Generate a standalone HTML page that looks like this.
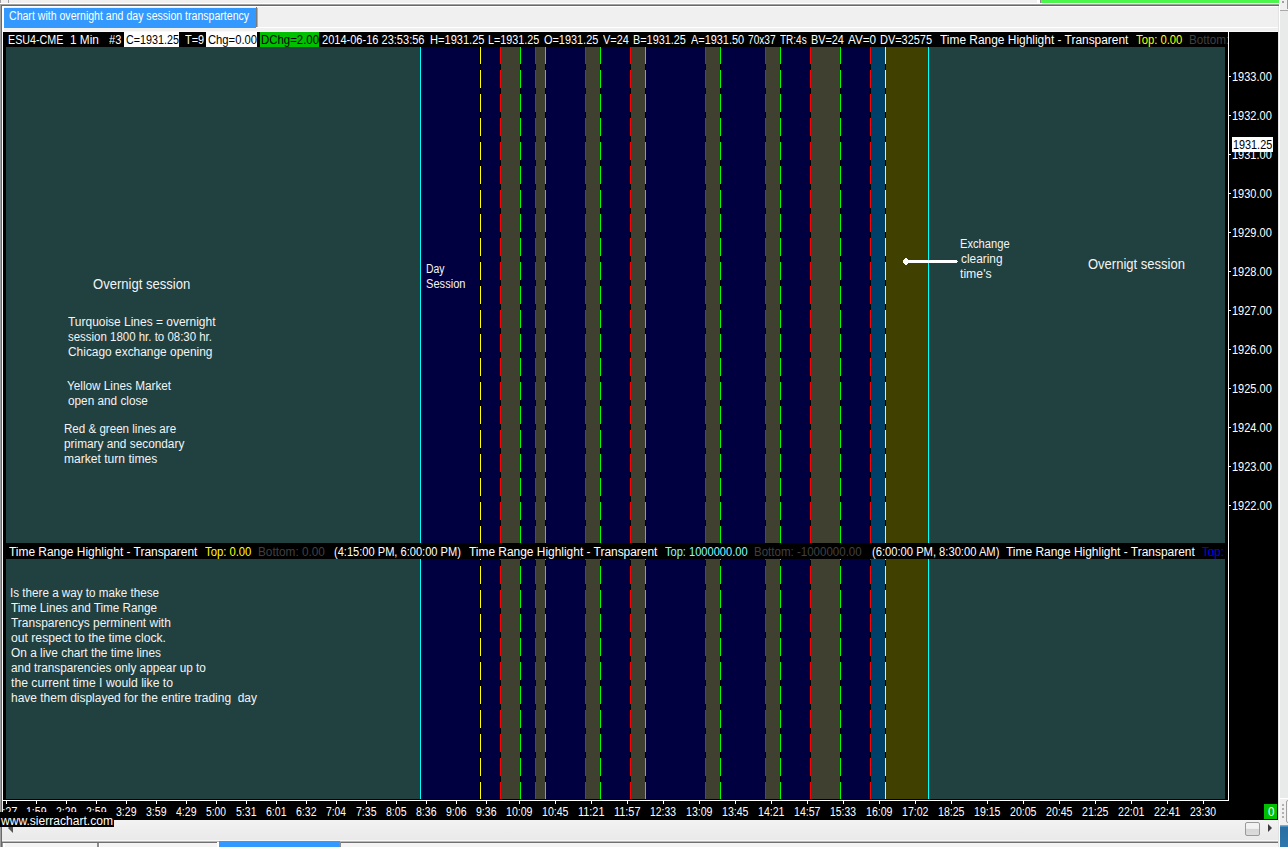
<!DOCTYPE html><html><head><meta charset="utf-8"><title>Chart with overnight and day session transpartency</title><style>
html,body{margin:0;padding:0;}
body{width:1288px;height:847px;overflow:hidden;background:#f0f0f0;position:relative;font-family:"Liberation Sans", sans-serif;}
div,span{position:absolute;}
.t,.tw{white-space:pre;line-height:16px;height:16px;transform-origin:0 0;}
.p{left:6px;width:1219px;overflow:hidden;background:#214040;}
.b{top:0;bottom:0;}
.v{top:0;bottom:0;width:1px;}
</style></head><body>
<div style="left:0;top:3px;width:1279px;height:1px;background:#fff"></div>
<div style="left:1041px;top:0;width:238px;height:3px;background:#4cf64c"></div>
<div style="left:1040px;top:0;width:1px;height:3px;background:#8a8a8a"></div>
<div style="left:1037px;top:0;width:3px;height:3px;background:#fff"></div>
<div style="left:2px;top:6px;width:1276px;height:1px;background:#fff"></div>
<div style="left:2px;top:27px;width:1276px;height:1px;background:#fff"></div>
<div style="left:2px;top:31px;width:1276px;height:1px;background:#fdf8f8"></div>
<div style="left:2px;top:6px;width:2px;height:26px;background:#fff"></div>
<div style="left:4px;top:8px;width:252px;height:20px;background:#3399ff"></div>
<div style="left:256px;top:7px;width:1px;height:20px;background:#7a7a7a"></div>
<div style="left:257px;top:8px;width:1px;height:19px;background:#b0b0b0"></div>
<div style="left:1278px;top:4px;width:1px;height:843px;background:#e3e3e3"></div>
<div style="left:1279px;top:0;width:1px;height:847px;background:#fff"></div>
<div style="left:1280px;top:11px;width:8px;height:787px;background:#e9ebeb"></div>
<div style="left:1280px;top:10px;width:8px;height:1px;background:#a8a8a8"></div>
<div style="left:1287px;top:0;width:1px;height:9px;background:#9a9a9a"></div>
<div style="left:1282px;top:1px;width:2px;height:2px;background:#a0a0a0"></div>
<div style="left:1280px;top:798px;width:8px;height:1px;background:#fff"></div>
<div style="left:1282px;top:804px;width:2px;height:2px;background:#b0b0b0"></div>
<div style="left:1282px;top:808px;width:2px;height:2px;background:#b0b0b0"></div>
<div style="left:1282px;top:812px;width:2px;height:2px;background:#b0b0b0"></div>
<div style="left:1282px;top:816px;width:2px;height:2px;background:#b0b0b0"></div>
<div style="left:1286px;top:800px;width:4px;height:23px;border:1px solid #a0a0a0;border-radius:2px;box-sizing:border-box;background:#f6f6f6"></div>
<div style="left:1280px;top:825px;width:8px;height:22px;background:linear-gradient(#6ab0dc 0,#6ab0dc 1px,#2a6ea2 2px,#2f78ae)"></div>
<div style="left:3px;top:32px;width:1275px;height:788px;background:#000"></div>
<div class="p" style="top:47px;height:496px"><div class="b" style="left:415px;width:507px;background:#000040"></div><div class="b" style="left:495px;width:19px;background:#404030"></div><div class="b" style="left:530px;width:9px;background:#404030"></div><div class="b" style="left:580px;width:14px;background:#404030"></div><div class="b" style="left:625px;width:14px;background:#404030"></div><div class="b" style="left:700px;width:14px;background:#404030"></div><div class="b" style="left:760px;width:14px;background:#404030"></div><div class="b" style="left:805px;width:29px;background:#404030"></div><div class="b" style="left:865px;width:14px;background:#004068"></div><div class="b" style="left:880px;width:42px;background:#404000"></div><div class="v" style="left:414px;background:#00ffff"></div><div class="v" style="left:922px;background:#00ffff"></div><div class="v" style="left:474px;background:repeating-linear-gradient(to bottom,#ffff00 0,#ffff00 18px,#000 18px,#000 24px);background-position:0 -1px;background-size:1px 24px"></div><div class="v" style="left:879px;background:repeating-linear-gradient(to bottom,#ffff00 0,#ffff00 18px,#000 18px,#000 24px);background-position:0 -1px;background-size:1px 24px"></div><div class="v" style="left:494px;background:repeating-linear-gradient(to bottom,#ff0000 0,#ff0000 18px,#000 18px,#000 24px);background-position:0 -1px;background-size:1px 24px"></div><div class="v" style="left:529px;background:repeating-linear-gradient(to bottom,#ff0000 0,#ff0000 18px,#000 18px,#000 24px);background-position:0 -1px;background-size:1px 24px"></div><div class="v" style="left:579px;background:repeating-linear-gradient(to bottom,#ff0000 0,#ff0000 18px,#000 18px,#000 24px);background-position:0 -1px;background-size:1px 24px"></div><div class="v" style="left:624px;background:repeating-linear-gradient(to bottom,#ff0000 0,#ff0000 18px,#000 18px,#000 24px);background-position:0 -1px;background-size:1px 24px"></div><div class="v" style="left:699px;background:repeating-linear-gradient(to bottom,#ff0000 0,#ff0000 18px,#000 18px,#000 24px);background-position:0 -1px;background-size:1px 24px"></div><div class="v" style="left:759px;background:repeating-linear-gradient(to bottom,#ff0000 0,#ff0000 18px,#000 18px,#000 24px);background-position:0 -1px;background-size:1px 24px"></div><div class="v" style="left:804px;background:repeating-linear-gradient(to bottom,#ff0000 0,#ff0000 18px,#000 18px,#000 24px);background-position:0 -1px;background-size:1px 24px"></div><div class="v" style="left:864px;background:repeating-linear-gradient(to bottom,#ff0000 0,#ff0000 18px,#000 18px,#000 24px);background-position:0 -1px;background-size:1px 24px"></div><div class="v" style="left:514px;background:repeating-linear-gradient(to bottom,#00ff00 0,#00ff00 18px,#000 18px,#000 24px);background-position:0 -1px;background-size:1px 24px"></div><div class="v" style="left:539px;background:repeating-linear-gradient(to bottom,#00ff00 0,#00ff00 18px,#000 18px,#000 24px);background-position:0 -1px;background-size:1px 24px"></div><div class="v" style="left:594px;background:repeating-linear-gradient(to bottom,#00ff00 0,#00ff00 18px,#000 18px,#000 24px);background-position:0 -1px;background-size:1px 24px"></div><div class="v" style="left:639px;background:repeating-linear-gradient(to bottom,#00ff00 0,#00ff00 18px,#000 18px,#000 24px);background-position:0 -1px;background-size:1px 24px"></div><div class="v" style="left:714px;background:repeating-linear-gradient(to bottom,#00ff00 0,#00ff00 18px,#000 18px,#000 24px);background-position:0 -1px;background-size:1px 24px"></div><div class="v" style="left:774px;background:repeating-linear-gradient(to bottom,#00ff00 0,#00ff00 18px,#000 18px,#000 24px);background-position:0 -1px;background-size:1px 24px"></div><div class="v" style="left:834px;background:repeating-linear-gradient(to bottom,#00ff00 0,#00ff00 18px,#000 18px,#000 24px);background-position:0 -1px;background-size:1px 24px"></div></div>
<div class="p" style="top:559px;height:240px"><div class="b" style="left:415px;width:507px;background:#000040"></div><div class="b" style="left:495px;width:19px;background:#404030"></div><div class="b" style="left:530px;width:9px;background:#404030"></div><div class="b" style="left:580px;width:14px;background:#404030"></div><div class="b" style="left:625px;width:14px;background:#404030"></div><div class="b" style="left:700px;width:14px;background:#404030"></div><div class="b" style="left:760px;width:14px;background:#404030"></div><div class="b" style="left:805px;width:29px;background:#404030"></div><div class="b" style="left:865px;width:14px;background:#004068"></div><div class="b" style="left:880px;width:42px;background:#404000"></div><div class="v" style="left:414px;background:#00ffff"></div><div class="v" style="left:922px;background:#00ffff"></div><div class="v" style="left:474px;background:repeating-linear-gradient(to bottom,#ffff00 0,#ffff00 18px,#000 18px,#000 24px);background-position:0 -17px;background-size:1px 24px"></div><div class="v" style="left:879px;background:repeating-linear-gradient(to bottom,#ffff00 0,#ffff00 18px,#000 18px,#000 24px);background-position:0 -17px;background-size:1px 24px"></div><div class="v" style="left:494px;background:repeating-linear-gradient(to bottom,#ff0000 0,#ff0000 18px,#000 18px,#000 24px);background-position:0 -17px;background-size:1px 24px"></div><div class="v" style="left:529px;background:repeating-linear-gradient(to bottom,#ff0000 0,#ff0000 18px,#000 18px,#000 24px);background-position:0 -17px;background-size:1px 24px"></div><div class="v" style="left:579px;background:repeating-linear-gradient(to bottom,#ff0000 0,#ff0000 18px,#000 18px,#000 24px);background-position:0 -17px;background-size:1px 24px"></div><div class="v" style="left:624px;background:repeating-linear-gradient(to bottom,#ff0000 0,#ff0000 18px,#000 18px,#000 24px);background-position:0 -17px;background-size:1px 24px"></div><div class="v" style="left:699px;background:repeating-linear-gradient(to bottom,#ff0000 0,#ff0000 18px,#000 18px,#000 24px);background-position:0 -17px;background-size:1px 24px"></div><div class="v" style="left:759px;background:repeating-linear-gradient(to bottom,#ff0000 0,#ff0000 18px,#000 18px,#000 24px);background-position:0 -17px;background-size:1px 24px"></div><div class="v" style="left:804px;background:repeating-linear-gradient(to bottom,#ff0000 0,#ff0000 18px,#000 18px,#000 24px);background-position:0 -17px;background-size:1px 24px"></div><div class="v" style="left:864px;background:repeating-linear-gradient(to bottom,#ff0000 0,#ff0000 18px,#000 18px,#000 24px);background-position:0 -17px;background-size:1px 24px"></div><div class="v" style="left:514px;background:repeating-linear-gradient(to bottom,#00ff00 0,#00ff00 18px,#000 18px,#000 24px);background-position:0 -17px;background-size:1px 24px"></div><div class="v" style="left:539px;background:repeating-linear-gradient(to bottom,#00ff00 0,#00ff00 18px,#000 18px,#000 24px);background-position:0 -17px;background-size:1px 24px"></div><div class="v" style="left:594px;background:repeating-linear-gradient(to bottom,#00ff00 0,#00ff00 18px,#000 18px,#000 24px);background-position:0 -17px;background-size:1px 24px"></div><div class="v" style="left:639px;background:repeating-linear-gradient(to bottom,#00ff00 0,#00ff00 18px,#000 18px,#000 24px);background-position:0 -17px;background-size:1px 24px"></div><div class="v" style="left:714px;background:repeating-linear-gradient(to bottom,#00ff00 0,#00ff00 18px,#000 18px,#000 24px);background-position:0 -17px;background-size:1px 24px"></div><div class="v" style="left:774px;background:repeating-linear-gradient(to bottom,#00ff00 0,#00ff00 18px,#000 18px,#000 24px);background-position:0 -17px;background-size:1px 24px"></div><div class="v" style="left:834px;background:repeating-linear-gradient(to bottom,#00ff00 0,#00ff00 18px,#000 18px,#000 24px);background-position:0 -17px;background-size:1px 24px"></div></div>
<div style="left:124px;top:32px;width:55px;height:15px;background:#fff"></div>
<div style="left:206px;top:32px;width:51px;height:15px;background:#fff"></div>
<div style="left:260px;top:32px;width:59px;height:15px;background:#00c000"></div>
<div style="left:1228px;top:32px;width:1px;height:769px;background:#fff"></div>
<div style="left:3px;top:800px;width:1226px;height:1px;background:#fff"></div>
<div style="left:1229px;top:76px;width:2px;height:1px;background:#fff"></div>
<div style="left:1229px;top:115px;width:2px;height:1px;background:#fff"></div>
<div style="left:1229px;top:154px;width:2px;height:1px;background:#fff"></div>
<div style="left:1229px;top:193px;width:2px;height:1px;background:#fff"></div>
<div style="left:1229px;top:232px;width:2px;height:1px;background:#fff"></div>
<div style="left:1229px;top:271px;width:2px;height:1px;background:#fff"></div>
<div style="left:1229px;top:310px;width:2px;height:1px;background:#fff"></div>
<div style="left:1229px;top:349px;width:2px;height:1px;background:#fff"></div>
<div style="left:1229px;top:388px;width:2px;height:1px;background:#fff"></div>
<div style="left:1229px;top:427px;width:2px;height:1px;background:#fff"></div>
<div style="left:1229px;top:466px;width:2px;height:1px;background:#fff"></div>
<div style="left:1229px;top:505px;width:2px;height:1px;background:#fff"></div>
<div style="left:6px;top:801px;width:1px;height:3px;background:#fff"></div>
<div style="left:36px;top:801px;width:1px;height:3px;background:#fff"></div>
<div style="left:66px;top:801px;width:1px;height:3px;background:#fff"></div>
<div style="left:96px;top:801px;width:1px;height:3px;background:#fff"></div>
<div style="left:126px;top:801px;width:1px;height:3px;background:#fff"></div>
<div style="left:156px;top:801px;width:1px;height:3px;background:#fff"></div>
<div style="left:186px;top:801px;width:1px;height:3px;background:#fff"></div>
<div style="left:216px;top:801px;width:1px;height:3px;background:#fff"></div>
<div style="left:246px;top:801px;width:1px;height:3px;background:#fff"></div>
<div style="left:276px;top:801px;width:1px;height:3px;background:#fff"></div>
<div style="left:306px;top:801px;width:1px;height:3px;background:#fff"></div>
<div style="left:336px;top:801px;width:1px;height:3px;background:#fff"></div>
<div style="left:366px;top:801px;width:1px;height:3px;background:#fff"></div>
<div style="left:396px;top:801px;width:1px;height:3px;background:#fff"></div>
<div style="left:426px;top:801px;width:1px;height:3px;background:#fff"></div>
<div style="left:456px;top:801px;width:1px;height:3px;background:#fff"></div>
<div style="left:486px;top:801px;width:1px;height:3px;background:#fff"></div>
<div style="left:519px;top:801px;width:1px;height:3px;background:#fff"></div>
<div style="left:555px;top:801px;width:1px;height:3px;background:#fff"></div>
<div style="left:591px;top:801px;width:1px;height:3px;background:#fff"></div>
<div style="left:627px;top:801px;width:1px;height:3px;background:#fff"></div>
<div style="left:663px;top:801px;width:1px;height:3px;background:#fff"></div>
<div style="left:699px;top:801px;width:1px;height:3px;background:#fff"></div>
<div style="left:735px;top:801px;width:1px;height:3px;background:#fff"></div>
<div style="left:771px;top:801px;width:1px;height:3px;background:#fff"></div>
<div style="left:807px;top:801px;width:1px;height:3px;background:#fff"></div>
<div style="left:843px;top:801px;width:1px;height:3px;background:#fff"></div>
<div style="left:879px;top:801px;width:1px;height:3px;background:#fff"></div>
<div style="left:915px;top:801px;width:1px;height:3px;background:#fff"></div>
<div style="left:951px;top:801px;width:1px;height:3px;background:#fff"></div>
<div style="left:987px;top:801px;width:1px;height:3px;background:#fff"></div>
<div style="left:1023px;top:801px;width:1px;height:3px;background:#fff"></div>
<div style="left:1059px;top:801px;width:1px;height:3px;background:#fff"></div>
<div style="left:1095px;top:801px;width:1px;height:3px;background:#fff"></div>
<div style="left:1131px;top:801px;width:1px;height:3px;background:#fff"></div>
<div style="left:1167px;top:801px;width:1px;height:3px;background:#fff"></div>
<div style="left:1203px;top:801px;width:1px;height:3px;background:#fff"></div>
<div style="left:1232px;top:137px;width:41px;height:15px;background:#fff"></div>
<div style="left:1264px;top:804px;width:13px;height:15px;background:#00c000"></div>
<div style="left:903px;top:260px;width:54px;height:3px;background:#fff"></div>
<div style="left:904px;top:259px;width:4px;height:5px;background:#fff"></div>
<div style="left:905px;top:258px;width:2px;height:7px;background:#fff"></div>
<div style="left:957px;top:261px;width:1px;height:1px;background:#dfe6e6"></div>
<div style="left:2px;top:820px;width:1276px;height:22px;background:linear-gradient(#f3f3f3,#ededed 50%,#e9e9e9)"></div>
<div style="left:2px;top:840px;width:1276px;height:1px;background:#f8f8f8"></div>
<div style="left:2px;top:841px;width:1276px;height:1px;background:#b8b8b8"></div>
<div style="left:2px;top:842px;width:1276px;height:1px;background:#707070"></div>
<div style="left:2px;top:843px;width:1276px;height:4px;background:#f4f4f4"></div>
<div style="left:2px;top:843px;width:1px;height:4px;background:#9a9a9a"></div>
<div style="left:3px;top:843px;width:2px;height:4px;background:#fff"></div>
<div style="left:97px;top:843px;width:2px;height:4px;background:#8c8c8c"></div>
<div style="left:99px;top:843px;width:1px;height:4px;background:#fff"></div>
<div style="left:217px;top:842px;width:2px;height:5px;background:#fff"></div>
<div style="left:219px;top:841.4px;width:121px;height:6px;background:#3399ff"></div>
<div style="left:339px;top:842px;width:2px;height:5px;background:#8c8c8c"></div>
<div style="left:1245px;top:822px;width:15px;height:14px;background:linear-gradient(#f2f2f2,#f2f2f2 45%,#d6d6d6 50%,#dcdcdc);border:1px solid #9a9a9a;box-sizing:border-box;border-radius:2px"></div>
<div style="left:1268px;top:824px;width:0;height:0;border-left:4px solid #3c3c3c;border-top:4px solid transparent;border-bottom:4px solid transparent"></div>
<div style="left:7.5px;top:822.5px;width:0;height:0;border-right:5px solid #555;border-top:5px solid transparent;border-bottom:5px solid transparent"></div>
<span class="t" style="left:8.10px;top:31.50px;font-size:12.5px;transform:scaleX(0.8577);color:#fff;">ESU4-CME</span>
<span class="t" style="left:70.30px;top:31.50px;font-size:12.5px;transform:scaleX(0.9451);color:#fff;">1 Min</span>
<span class="t" style="left:108.70px;top:31.50px;font-size:12.5px;transform:scaleX(0.8845);color:#fff;">#3</span>
<span class="t" style="left:125.50px;top:31.50px;font-size:12.5px;transform:scaleX(0.8616);color:#000;">C=1931.25</span>
<span class="t" style="left:184.50px;top:31.50px;font-size:12.5px;transform:scaleX(0.8725);color:#fff;">T=9</span>
<span class="t" style="left:207.50px;top:31.50px;font-size:12.5px;transform:scaleX(0.8981);color:#000;">Chg=0.00</span>
<span class="t" style="left:260.50px;top:31.50px;font-size:12.5px;transform:scaleX(0.9120);color:#000;">DChg=2.00</span>
<span class="t" style="left:322.40px;top:31.50px;font-size:12.5px;transform:scaleX(0.8830);color:#fff;">2014-06-16 23:53:56</span>
<span class="t" style="left:429.60px;top:31.50px;font-size:12.5px;transform:scaleX(0.8860);color:#fff;">H=1931.25</span>
<span class="t" style="left:488.30px;top:31.50px;font-size:12.5px;transform:scaleX(0.8614);color:#fff;">L=1931.25</span>
<span class="t" style="left:544.20px;top:31.50px;font-size:12.5px;transform:scaleX(0.8727);color:#fff;">O=1931.25</span>
<span class="t" style="left:602.70px;top:31.50px;font-size:12.5px;transform:scaleX(0.8732);color:#fff;">V=24</span>
<span class="t" style="left:633.40px;top:31.50px;font-size:12.5px;transform:scaleX(0.8697);color:#fff;">B=1931.25</span>
<span class="t" style="left:690.50px;top:31.50px;font-size:12.5px;transform:scaleX(0.8730);color:#fff;">A=1931.50</span>
<span class="t" style="left:747.80px;top:31.50px;font-size:12.5px;transform:scaleX(0.8103);color:#fff;">70x37</span>
<span class="t" style="left:779.80px;top:31.50px;font-size:12.5px;transform:scaleX(0.8007);color:#fff;">TR:4s</span>
<span class="t" style="left:811.20px;top:31.50px;font-size:12.5px;transform:scaleX(0.8683);color:#fff;">BV=24</span>
<span class="t" style="left:847.50px;top:31.50px;font-size:12.5px;transform:scaleX(0.9367);color:#fff;">AV=0</span>
<span class="t" style="left:879.50px;top:31.50px;font-size:12.5px;transform:scaleX(0.8749);color:#fff;">DV=32575</span>
<span class="t" style="left:939.50px;top:31.50px;font-size:12.5px;transform:scaleX(0.9537);color:#fff;">Time Range Highlight - Transparent</span>
<span class="t" style="left:1135.50px;top:31.50px;font-size:12.5px;transform:scaleX(0.9001);color:#ffff00;">Top: 0.00</span>
<span class="t" style="left:1189.00px;top:31.50px;font-size:12.5px;transform:scaleX(0.9354);color:#404040;">Bottom: 0.00</span>
<span class="t" style="left:8.50px;top:543.50px;font-size:12.5px;transform:scaleX(0.9537);color:#fff;">Time Range Highlight - Transparent</span>
<span class="t" style="left:204.50px;top:543.50px;font-size:12.5px;transform:scaleX(0.9001);color:#ffff00;">Top: 0.00</span>
<span class="t" style="left:257.90px;top:543.50px;font-size:12.5px;transform:scaleX(0.9439);color:#404040;">Bottom: 0.00</span>
<span class="t" style="left:334.30px;top:543.50px;font-size:12.5px;transform:scaleX(0.8865);color:#fff;">(4:15:00 PM, 6:00:00 PM)</span>
<span class="t" style="left:469.20px;top:543.50px;font-size:12.5px;transform:scaleX(0.9537);color:#fff;">Time Range Highlight - Transparent</span>
<span class="t" style="left:664.70px;top:543.50px;font-size:12.5px;transform:scaleX(0.8868);color:#80ffff;">Top: 1000000.00</span>
<span class="t" style="left:753.50px;top:543.50px;font-size:12.5px;transform:scaleX(0.9225);color:#404040;">Bottom: -1000000.00</span>
<span class="t" style="left:871.70px;top:543.50px;font-size:12.5px;transform:scaleX(0.8943);color:#fff;">(6:00:00 PM, 8:30:00 AM)</span>
<span class="t" style="left:1006.20px;top:543.50px;font-size:12.5px;transform:scaleX(0.9557);color:#fff;">Time Range Highlight - Transparent</span>
<span class="t" style="left:1201.90px;top:543.50px;font-size:12.5px;transform:scaleX(0.9254);color:#0000ff;">Top: 0.00</span>
<span class="t" style="left:8.50px;top:8.00px;font-size:12px;transform:scaleX(0.8801);color:#fff;">Chart with overnight and day session transpartency</span>
<span class="t" style="left:93.10px;top:275.50px;font-size:14px;transform:scaleX(0.9321);color:#f4f4f4;">Overnigt session</span>
<span class="t" style="left:67.50px;top:314.30px;font-size:12px;transform:scaleX(0.9967);color:#f4f4f4;">Turquoise Lines = overnight</span>
<span class="t" style="left:67.50px;top:329.30px;font-size:12px;transform:scaleX(0.9550);color:#f4f4f4;">session 1800 hr. to 08:30 hr.</span>
<span class="t" style="left:67.50px;top:344.30px;font-size:12px;transform:scaleX(0.9934);color:#f4f4f4;">Chicago exchange opening</span>
<span class="t" style="left:67.40px;top:378.00px;font-size:12px;transform:scaleX(0.9795);color:#f4f4f4;">Yellow Lines Market</span>
<span class="t" style="left:67.50px;top:393.00px;font-size:12px;transform:scaleX(0.9815);color:#f4f4f4;">open and close</span>
<span class="t" style="left:64.10px;top:420.80px;font-size:12px;transform:scaleX(0.9657);color:#f4f4f4;">Red &amp; green lines are</span>
<span class="t" style="left:64.20px;top:435.80px;font-size:12px;transform:scaleX(0.9856);color:#f4f4f4;">primary and secondary</span>
<span class="t" style="left:64.20px;top:450.80px;font-size:12px;transform:scaleX(1.0064);color:#f4f4f4;">market turn times</span>
<span class="t" style="left:425.50px;top:260.50px;font-size:12px;transform:scaleX(0.8668);color:#f4f4f4;">Day</span>
<span class="t" style="left:425.50px;top:275.50px;font-size:12px;transform:scaleX(0.9250);color:#f4f4f4;">Session</span>
<span class="t" style="left:960.40px;top:236.30px;font-size:12px;transform:scaleX(0.9293);color:#f4f4f4;">Exchange</span>
<span class="t" style="left:960.50px;top:251.20px;font-size:12px;transform:scaleX(0.9874);color:#f4f4f4;">clearing</span>
<span class="t" style="left:960.40px;top:266.30px;font-size:12px;transform:scaleX(1.0204);color:#f4f4f4;">time's</span>
<span class="t" style="left:1088.30px;top:256.00px;font-size:14px;transform:scaleX(0.9292);color:#f4f4f4;">Overnigt session</span>
<span class="t" style="left:10.00px;top:585.00px;font-size:12px;transform:scaleX(0.9718);color:#f4f4f4;">Is there a way to make these</span>
<span class="t" style="left:10.50px;top:600.00px;font-size:12px;transform:scaleX(0.9763);color:#f4f4f4;">Time Lines and Time Range</span>
<span class="t" style="left:10.50px;top:615.00px;font-size:12px;transform:scaleX(0.9969);color:#f4f4f4;">Transparencys perminent with</span>
<span class="t" style="left:10.50px;top:630.00px;font-size:12px;transform:scaleX(1.0147);color:#f4f4f4;">out respect to the time clock.</span>
<span class="t" style="left:10.50px;top:645.00px;font-size:12px;transform:scaleX(0.9907);color:#f4f4f4;">On a live chart the time lines</span>
<span class="t" style="left:10.50px;top:660.00px;font-size:12px;transform:scaleX(0.9836);color:#f4f4f4;">and transparencies only appear up to</span>
<span class="t" style="left:10.50px;top:675.00px;font-size:12px;transform:scaleX(1.0163);color:#f4f4f4;">the current time I would like to</span>
<span class="t" style="left:10.50px;top:690.00px;font-size:12px;transform:scaleX(0.9966);color:#f4f4f4;">have them displayed for the entire trading  day</span>
<span class="t" style="left:1231.90px;top:68.50px;font-size:12.5px;transform:scaleX(0.8808);color:#fff;">1933.00</span>
<span class="t" style="left:1231.90px;top:107.50px;font-size:12.5px;transform:scaleX(0.8808);color:#fff;">1932.00</span>
<span class="t" style="left:1231.90px;top:146.50px;font-size:12.5px;transform:scaleX(0.8808);color:#fff;">1931.00</span>
<span class="t" style="left:1231.90px;top:185.50px;font-size:12.5px;transform:scaleX(0.8808);color:#fff;">1930.00</span>
<span class="t" style="left:1231.90px;top:224.50px;font-size:12.5px;transform:scaleX(0.8808);color:#fff;">1929.00</span>
<span class="t" style="left:1231.90px;top:263.50px;font-size:12.5px;transform:scaleX(0.8808);color:#fff;">1928.00</span>
<span class="t" style="left:1231.90px;top:302.50px;font-size:12.5px;transform:scaleX(0.8808);color:#fff;">1927.00</span>
<span class="t" style="left:1231.90px;top:341.50px;font-size:12.5px;transform:scaleX(0.8808);color:#fff;">1926.00</span>
<span class="t" style="left:1231.90px;top:380.50px;font-size:12.5px;transform:scaleX(0.8808);color:#fff;">1925.00</span>
<span class="t" style="left:1231.90px;top:419.50px;font-size:12.5px;transform:scaleX(0.8808);color:#fff;">1924.00</span>
<span class="t" style="left:1231.90px;top:458.50px;font-size:12.5px;transform:scaleX(0.8808);color:#fff;">1923.00</span>
<span class="t" style="left:1231.90px;top:497.50px;font-size:12.5px;transform:scaleX(0.8808);color:#fff;">1922.00</span>
<span class="t" style="left:1233.00px;top:137.00px;font-size:12.5px;transform:scaleX(0.8675);color:#000;">1931.25</span>
<span class="t" style="left:-4.25px;top:804.00px;font-size:12.5px;transform:scaleX(0.8832);color:#fff;">1:27</span>
<span class="t" style="left:26.25px;top:804.00px;font-size:12.5px;transform:scaleX(0.8421);color:#fff;">1:59</span>
<span class="t" style="left:56.25px;top:804.00px;font-size:12.5px;transform:scaleX(0.8421);color:#fff;">2:29</span>
<span class="t" style="left:86.25px;top:804.00px;font-size:12.5px;transform:scaleX(0.8421);color:#fff;">2:59</span>
<span class="t" style="left:116.25px;top:804.00px;font-size:12.5px;transform:scaleX(0.8421);color:#fff;">3:29</span>
<span class="t" style="left:146.25px;top:804.00px;font-size:12.5px;transform:scaleX(0.8421);color:#fff;">3:59</span>
<span class="t" style="left:176.25px;top:804.00px;font-size:12.5px;transform:scaleX(0.8421);color:#fff;">4:29</span>
<span class="t" style="left:206.25px;top:804.00px;font-size:12.5px;transform:scaleX(0.8216);color:#fff;">5:00</span>
<span class="t" style="left:236.25px;top:804.00px;font-size:12.5px;transform:scaleX(0.8421);color:#fff;">5:31</span>
<span class="t" style="left:266.25px;top:804.00px;font-size:12.5px;transform:scaleX(0.8421);color:#fff;">6:01</span>
<span class="t" style="left:296.25px;top:804.00px;font-size:12.5px;transform:scaleX(0.8421);color:#fff;">6:32</span>
<span class="t" style="left:326.25px;top:804.00px;font-size:12.5px;transform:scaleX(0.8216);color:#fff;">7:04</span>
<span class="t" style="left:356.25px;top:804.00px;font-size:12.5px;transform:scaleX(0.8421);color:#fff;">7:35</span>
<span class="t" style="left:386.25px;top:804.00px;font-size:12.5px;transform:scaleX(0.8421);color:#fff;">8:05</span>
<span class="t" style="left:416.25px;top:804.00px;font-size:12.5px;transform:scaleX(0.8421);color:#fff;">8:36</span>
<span class="t" style="left:446.25px;top:804.00px;font-size:12.5px;transform:scaleX(0.8421);color:#fff;">9:06</span>
<span class="t" style="left:476.25px;top:804.00px;font-size:12.5px;transform:scaleX(0.8421);color:#fff;">9:36</span>
<span class="t" style="left:506.25px;top:804.00px;font-size:12.5px;transform:scaleX(0.8472);color:#fff;">10:09</span>
<span class="t" style="left:542.25px;top:804.00px;font-size:12.5px;transform:scaleX(0.8472);color:#fff;">10:45</span>
<span class="t" style="left:578.25px;top:804.00px;font-size:12.5px;transform:scaleX(0.8729);color:#fff;">11:21</span>
<span class="t" style="left:614.25px;top:804.00px;font-size:12.5px;transform:scaleX(0.8729);color:#fff;">11:57</span>
<span class="t" style="left:650.25px;top:804.00px;font-size:12.5px;transform:scaleX(0.8312);color:#fff;">12:33</span>
<span class="t" style="left:686.25px;top:804.00px;font-size:12.5px;transform:scaleX(0.8472);color:#fff;">13:09</span>
<span class="t" style="left:722.25px;top:804.00px;font-size:12.5px;transform:scaleX(0.8472);color:#fff;">13:45</span>
<span class="t" style="left:758.25px;top:804.00px;font-size:12.5px;transform:scaleX(0.8472);color:#fff;">14:21</span>
<span class="t" style="left:794.25px;top:804.00px;font-size:12.5px;transform:scaleX(0.8472);color:#fff;">14:57</span>
<span class="t" style="left:830.25px;top:804.00px;font-size:12.5px;transform:scaleX(0.8312);color:#fff;">15:33</span>
<span class="t" style="left:866.25px;top:804.00px;font-size:12.5px;transform:scaleX(0.8472);color:#fff;">16:09</span>
<span class="t" style="left:902.25px;top:804.00px;font-size:12.5px;transform:scaleX(0.8472);color:#fff;">17:02</span>
<span class="t" style="left:938.25px;top:804.00px;font-size:12.5px;transform:scaleX(0.8472);color:#fff;">18:25</span>
<span class="t" style="left:974.25px;top:804.00px;font-size:12.5px;transform:scaleX(0.8472);color:#fff;">19:15</span>
<span class="t" style="left:1010.25px;top:804.00px;font-size:12.5px;transform:scaleX(0.8472);color:#fff;">20:05</span>
<span class="t" style="left:1046.25px;top:804.00px;font-size:12.5px;transform:scaleX(0.8472);color:#fff;">20:45</span>
<span class="t" style="left:1082.25px;top:804.00px;font-size:12.5px;transform:scaleX(0.8472);color:#fff;">21:25</span>
<span class="t" style="left:1118.25px;top:804.00px;font-size:12.5px;transform:scaleX(0.8472);color:#fff;">22:01</span>
<span class="t" style="left:1154.25px;top:804.00px;font-size:12.5px;transform:scaleX(0.8472);color:#fff;">22:41</span>
<span class="t" style="left:1190.25px;top:804.00px;font-size:12.5px;transform:scaleX(0.8312);color:#fff;">23:30</span>
<span class="t" style="left:1267.70px;top:804.00px;font-size:12.5px;transform:scaleX(0.9204);color:#fff;">0</span>
<span class="t"></span>
<div style="left:1229px;top:32px;width:49px;height:15px;background:#000"></div>
<div style="left:1225px;top:543px;width:3px;height:16px;background:#000"></div>
<div style="left:1229px;top:543px;width:49px;height:16px;background:#000"></div>
<div style="left:1228px;top:32px;width:1px;height:15px;background:#fff"></div>
<div style="left:1228px;top:543px;width:1px;height:16px;background:#fff"></div>
<div style="left:0;top:0;width:1px;height:3px;background:#a0a0a0"></div>
<div style="left:8px;top:0;width:1px;height:3px;background:#a0a0a0"></div>
<div style="left:0;top:4px;width:1279px;height:1px;background:#a0a0a0"></div>
<div style="left:1px;top:5px;width:1278px;height:1px;background:#696969"></div>
<div style="left:0;top:4px;width:1px;height:843px;background:#a0a0a0"></div>
<div style="left:1px;top:5px;width:1px;height:842px;background:#696969"></div>
<div style="left:2px;top:32px;width:1px;height:769px;background:#fff"></div>
<div style="left:0;top:812px;width:114px;height:15px;background:#000"></div><span class="tw" style="left:1.00px;top:812.50px;font-size:12.5px;transform:scaleX(0.9655);color:#fff">www.sierrachart.com</span>
</body></html>
